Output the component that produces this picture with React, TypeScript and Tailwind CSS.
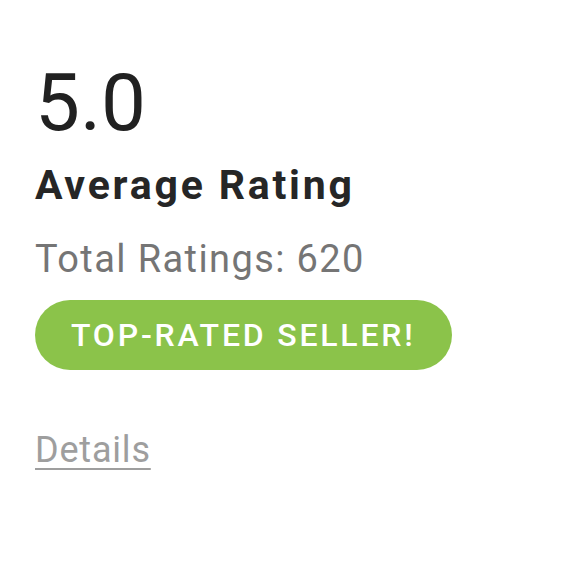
export default function App() {
  return (
    <div className="min-h-[580px] w-[580px] bg-white pl-[35px] pt-[63px] font-['Roboto',sans-serif]">
      <div className="flex flex-col items-start">
        {/* Score */}
        <div className="text-[80px] leading-[80px] font-normal text-[#212121]">5.0</div>
        <div className="mt-[18px] text-[41px] leading-[48px] font-bold tracking-[2.8px] text-[#262626]">Average Rating</div>
        <div className="mt-[28px] text-[38px] leading-[44px] tracking-[1.4px] text-[#757575]">Total Ratings: 620</div>

        {/* Badge */}
        <div className="mt-[19px] flex h-[70px] items-center rounded-full bg-[#8bc34a] pl-[36px] pr-[36px] text-[32px] font-medium tracking-[2.8px] text-white">
          TOP-RATED SELLER!
        </div>

        <a
          href="#"
          className="mt-[59px] text-[36px] leading-[42px] tracking-[0.8px] text-[#9e9e9e] underline decoration-2 underline-offset-[6px]"
        >
          Details
        </a>
      </div>
    </div>
  );
}
